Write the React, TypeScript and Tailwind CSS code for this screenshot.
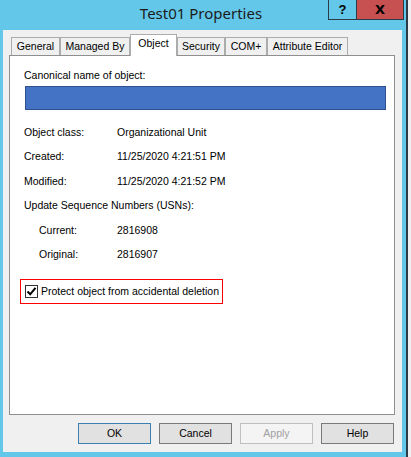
import { FC } from 'react';

const tabs = [
  { name: 'General', w: 'w-[49px]' },
  { name: 'Managed By', w: 'w-[70px]' },
  { name: 'Object', w: 'w-[47px]', active: true },
  { name: 'Security', w: 'w-[48px]' },
  { name: 'COM+', w: 'w-[42px]' },
  { name: 'Attribute Editor', w: 'w-[81px]' },
];

const rows = [
  { label: 'Object class:', value: 'Organizational Unit' },
  { label: 'Created:', value: '11/25/2020 4:21:51 PM' },
  { label: 'Modified:', value: '11/25/2020 4:21:52 PM' },
  { label: 'Update Sequence Numbers (USNs):' },
  { label: 'Current:', value: '2816908', indent: true },
  { label: 'Original:', value: '2816907', indent: true },
];

const App: FC = () => {
  return (
    <div className="flex w-[411px] h-[457px] bg-[#eef0f2] font-['Liberation_Sans',Arial,sans-serif] text-[10.5px] text-black">
      {/* window */}
      <div className="w-[406px] h-full bg-[#63c7e9] flex flex-col pl-[3px] pr-[4px] pb-[6px]">
        {/* title bar */}
        <div className="relative h-[30px] shrink-0">
          <div className="text-center pt-[3px] pr-[3px] font-['Noto_Sans',sans-serif] text-[15px] leading-[20px] text-[#1b1b1b]">
            Test01 Properties
          </div>
          <div className="absolute top-0 right-[-2px] flex">
            <div className="w-[29px] h-[20px] border border-t-0 border-[#2b3b48] flex items-center justify-center font-['Liberation_Sans',sans-serif] font-bold text-[13px] leading-none">
              ?
            </div>
            <div className="w-[47px] h-[20px] border border-t-0 border-l-0 border-[#2b3b48] bg-[#c75050] flex items-center justify-center font-['DejaVu_Sans',sans-serif] font-bold text-[13px] leading-none">
              X
            </div>
          </div>
        </div>
        {/* client */}
        <div className="flex-1 bg-[#f0f0f0] flex flex-col pl-[6px] pr-[7px] pt-[5px] pb-[8px]">
          {/* tabs */}
          <div className="flex items-end h-[20px] pl-[2px]">
            {tabs.map((t) =>
              t.active ? (
                <div
                  key={t.name}
                  className={`${t.w} h-[22px] -mb-px relative z-10 bg-white border border-b-0 border-[#acacac] text-center pt-[2px] leading-[13px]`}
                >
                  {t.name}
                </div>
              ) : (
                <div
                  key={t.name}
                  className={`${t.w} h-[18px] bg-[#f0f0f0] border border-b-0 border-[#acacac] text-center pt-[2px] leading-[13px]`}
                >
                  {t.name}
                </div>
              ),
            )}
          </div>
          {/* panel */}
          <div className="w-[386px] h-[360px] bg-white border border-[#8f8f8f] pl-[14px] pt-[13px]">
            <div className="leading-[13px]">Canonical name of object:</div>
            <div className="mt-[4px] ml-px w-[361px] h-[24px] bg-[#4472c4] border border-[#2f528f]" />
            <div className="mt-[10px] flex flex-col">
              {rows.map((r) => (
                <div key={r.label} className="h-[24.5px] flex items-center leading-[13px]">
                  <span className={r.indent ? 'w-[93px] pl-[15px] shrink-0' : 'w-[93px] shrink-0'}>
                    {r.value ? r.label : <span className="whitespace-nowrap">{r.label}</span>}
                  </span>
                  {r.value && <span>{r.value}</span>}
                </div>
              ))}
            </div>
            <div className="mt-[12px] -ml-[4px] w-[203px] h-[25px] border border-[#ff0000] flex items-center pl-[4px]">
              <div className="w-[13px] h-[13px] border border-[#333] bg-white flex items-center justify-center shrink-0">
                <svg width="11" height="11" viewBox="0 0 11 11">
                  <path d="M1.5 5.5 L4.2 8.3 L9.5 1.8" fill="none" stroke="#000" strokeWidth="2" />
                </svg>
              </div>
              <span className="ml-[3px] leading-[13px] whitespace-nowrap">Protect object from accidental deletion</span>
            </div>
          </div>
          {/* buttons */}
          <div className="flex justify-end gap-[8px] mt-[8px] pr-[1px]">
            <button className="w-[73px] h-[21px] bg-[#e1e1e1] border border-[#3c7fb1] leading-[13px]">OK</button>
            <button className="w-[73px] h-[21px] bg-[#e1e1e1] border border-[#7a7a7a] leading-[13px]">Cancel</button>
            <button className="w-[73px] h-[21px] bg-[#f4f4f4] border border-[#bfbfbf] text-[#a0a0a0] leading-[13px]">Apply</button>
            <button className="w-[73px] h-[21px] bg-[#e1e1e1] border border-[#7a7a7a] leading-[13px]">Help</button>
          </div>
        </div>
      </div>
      <div className="w-[2px] h-full bg-[#2b3b48]" />
    </div>
  );
};

export default App;
